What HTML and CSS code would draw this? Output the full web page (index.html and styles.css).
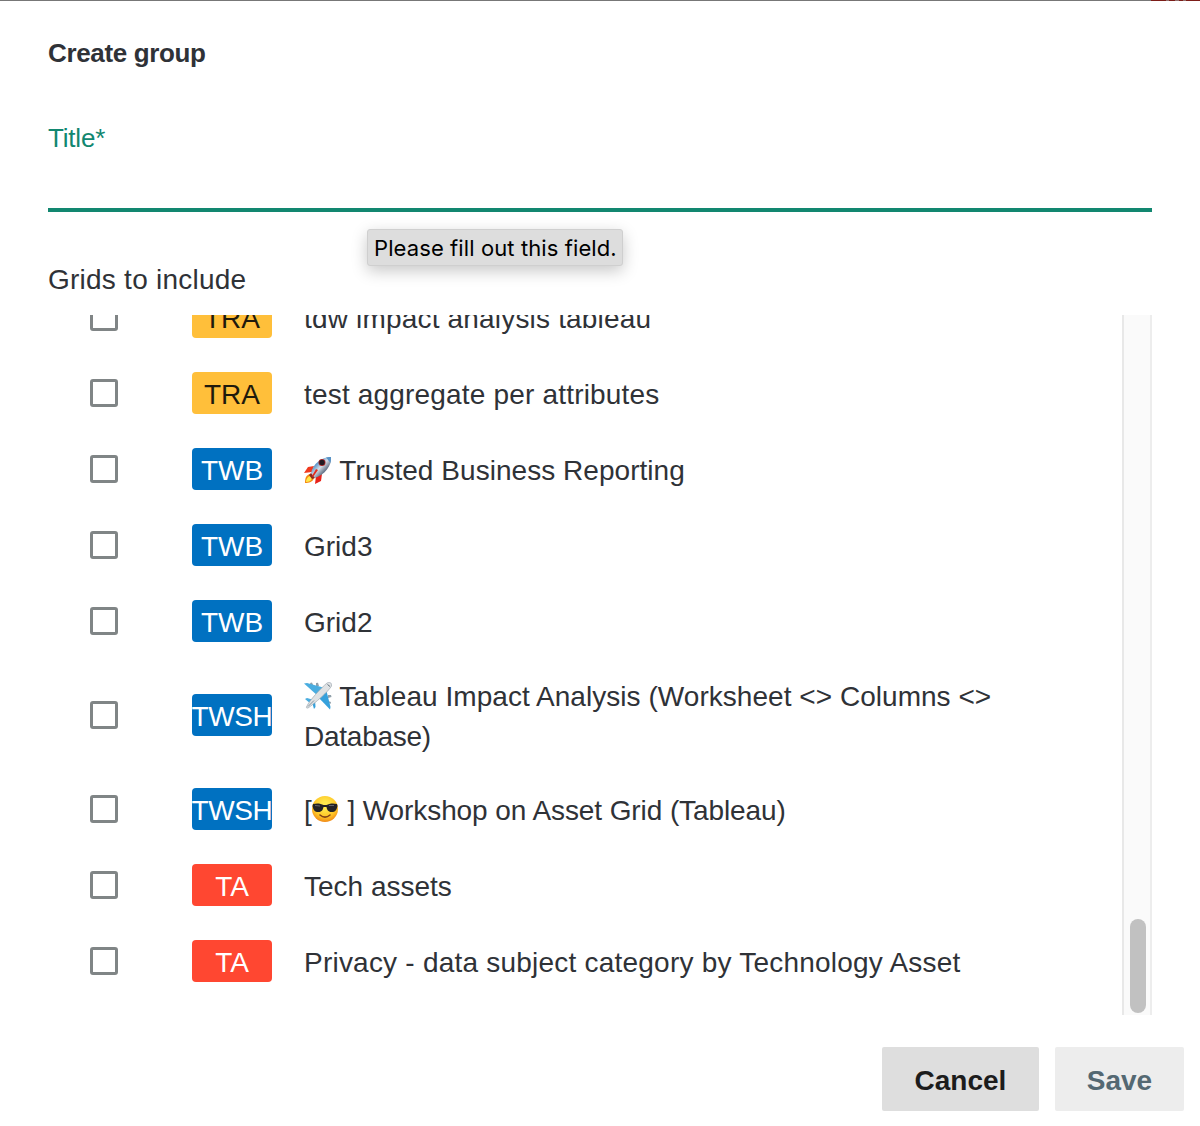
FILE: index.html
```html
<!DOCTYPE html>
<html lang="en">

<head>
    <meta charset="UTF-8">
    <meta name="viewport" content="width=device-width, initial-scale=1.0">
    <title>Create group</title>
    <link rel="stylesheet" href="styles.css">
</head>

<body>
    <form class="dialog" novalidate>
        <div class="backdrop-edge"><span></span></div>
        <div class="content">
            <h1>Create group</h1>
            <div class="form-group">
                <label for="title">Title*</label>
                <input type="text" id="title" required>
                <div class="tooltip">Please fill out this field.</div>
            </div>
            <h2>Grids to include</h2>
            <div class="grid-list">
                <div class="rows">
                    <div class="row">
                        <span class="checkbox"></span>
                        <span class="badge yellow">TRA</span>
                        <span class="name loose">tdw impact analysis tableau</span>
                    </div>
                    <div class="row">
                        <span class="checkbox"></span>
                        <span class="badge yellow">TRA</span>
                        <span class="name loose">test aggregate per attributes</span>
                    </div>
                    <div class="row">
                        <span class="checkbox"></span>
                        <span class="badge blue">TWB</span>
                        <span class="name normal"><svg class="emoji" viewBox="0 0 28 28">
                                <defs>
                                    <linearGradient id="hull" x1="0" y1="0" x2="1" y2="1">
                                        <stop offset="0.25" stop-color="#3f86c4" />
                                        <stop offset="0.48" stop-color="#d5dde6" />
                                        <stop offset="0.7" stop-color="#5b6b80" />
                                    </linearGradient>
                                </defs>
                                <path d="M10 10L4 11L0 17L8 16Z" fill="#f0391e" />
                                <path d="M18 18L17 25L11 28L12 20Z" fill="#e8221a" />
                                <path d="M6 18C2 19 1 22 1 27C5 27 9 26 10 22Z" fill="#f58a12" />
                                <path d="M6 20C3 21 2 24 2 26C5 26 7 25 8 22Z" fill="#ffe94a" />
                                <path d="M7 17C9 8 17 1 27 1C28 10 20 19 11 22Z" fill="url(#hull)" />
                                <path d="M22 1.5C24 1 26 1 27 1C27 3 27 5 26.500 7Z" fill="#5792c6" />
                                <path d="M7 17L11 22L8 23L5 19Z" fill="#8c2920" />
                                <path d="M14 14L9 21L8 20L12 13Z" fill="#e32b1d" />
                                <circle cx="18" cy="6.500" r="3.500" fill="#b52b2b" />
                                <circle cx="18" cy="6.500" r="2.700" fill="#211b22" />
                            </svg> Trusted Business Reporting</span>
                    </div>
                    <div class="row">
                        <span class="checkbox"></span>
                        <span class="badge blue">TWB</span>
                        <span class="name">Grid3</span>
                    </div>
                    <div class="row">
                        <span class="checkbox"></span>
                        <span class="badge blue">TWB</span>
                        <span class="name">Grid2</span>
                    </div>
                    <div class="row">
                        <span class="checkbox"></span>
                        <span class="badge blue wide">TWSH</span>
                        <span class="name normal"><svg class="emoji" viewBox="0 0 28 28">
                                <path d="M7 4L6 1L8 0.500L9.500 4M12 4L12 1L14 0.800L15 4M24 13L27 13L27.500 15L24 16M24 19L27 20L26.500 22L23.500 20" fill="#91a0aa" />
                                <path d="M0 1.500L3 1L21 6L14 14Z" fill="#49ade0" />
                                <path d="M22 7L26.500 25L26 27.500L14 15Z" fill="#36a1dc" />
                                <path d="M1 17L3 16L10 18L7 22Z" fill="#49ade0" />
                                <path d="M8 20L11 18L11.500 25L10 27Z" fill="#36a1dc" />
                                <path d="M3 24C5 19 17 6 23 1C25 0 28 0 27.500 4C25 9 10 22 4 26C2 26.500 2 25 3 24Z" fill="#dfe2e4" stroke="#9da8b0" stroke-width="0.700" />
                                <path d="M23.500 2.500L26 4.500" stroke="#62717c" stroke-width="1" />
                                <path d="M4 24.500L10 18.500" stroke="#8796a1" stroke-width="1" />
                            </svg> Tableau Impact Analysis (Worksheet &lt;&gt; Columns &lt;&gt; <span class="last-line">Database)</span></span>
                    </div>
                    <div class="row">
                        <span class="checkbox"></span>
                        <span class="badge blue wide">TWSH</span>
                        <span class="name tight">[<svg class="emoji" viewBox="0 0 28 28">
                                <defs>
                                    <radialGradient id="skin" cx="0.5" cy="0.35" r="0.65">
                                        <stop offset="0.2" stop-color="#ffe94c" />
                                        <stop offset="0.7" stop-color="#ffc425" />
                                        <stop offset="1" stop-color="#f08a18" />
                                    </radialGradient>
                                </defs>
                                <circle cx="13" cy="13" r="13" fill="url(#skin)" />
                                <path d="M1 8C5 7 9 7.500 11.500 9H14.500C17 7.500 21 7 25 8L25.500 10C24.500 14 23.500 16 19.500 16C16 16 15 13.500 14.500 11H11.500C11 13.500 10 16 6.500 16C2.500 16 1.500 14 0.500 10Z" fill="#242326" />
                                <path d="M3 9.500L8 10M17 9.500L22 9.500" stroke="#65656a" stroke-width="1" />
                                <path d="M8 19C11 21.500 15 21.500 18 19" fill="none" stroke="#804016" stroke-width="1.600" stroke-linecap="round" />
                            </svg> ] Workshop on Asset Grid (Tableau)</span>
                    </div>
                    <div class="row">
                        <span class="checkbox"></span>
                        <span class="badge red">TA</span>
                        <span class="name">Tech assets</span>
                    </div>
                    <div class="row">
                        <span class="checkbox"></span>
                        <span class="badge red">TA</span>
                        <span class="name looser">Privacy - data subject category by Technology Asset</span>
                    </div>
                </div>
                <div class="scrollbar">
                    <div class="thumb"></div>
                </div>
            </div>
        </div>
        <div class="actions">
            <button type="button" class="cancel">Cancel</button>
            <button type="submit" class="save" disabled>Save</button>
        </div>
    </form>
</body>

</html>
```
FILE: styles.css
```css
* {
    box-sizing: border-box;
}

body {
    margin: 0;
    font-family: "Liberation Sans", Arial, sans-serif;
    color: #2f3237;
    background-color: #fff;
}

.dialog {
    height: 1126px;
    overflow: hidden;
}

.backdrop-edge {
    height: 1px;
    display: flex;
    justify-content: flex-end;
    background-color: #777;
}

.backdrop-edge span {
    width: 49px;
    background: linear-gradient(to right, #7c1d18 15px, #926f6c 15px 18px, #7c1d18 18px 24px, #926f6c 24px 28px, #7c1d18 28px 32px, #926f6c 32px 35px, #7c1d18 35px);
}

.content {
    padding: 36px 48px 0;
}

h1 {
    margin: 0;
    font-size: 26px;
    line-height: 32px;
    letter-spacing: -0.35px;
}

.form-group {
    position: relative;
    height: 143px;
    padding-top: 53px;
}

label {
    display: block;
    font-size: 26px;
    line-height: 32px;
    letter-spacing: -0.2px;
    color: #128770;
}

input {
    display: block;
    width: 100%;
    height: 58px;
    padding: 0;
    border: none;
    border-bottom: 4px solid #128770;
    outline: none;
    font-size: 28px;
}

.tooltip {
    position: absolute;
    top: 160px;
    left: 319px;
    width: 256px;
    height: 37px;
    padding-left: 6px;
    border: 1px solid #cfcfcf;
    border-radius: 3px;
    background-color: #dddddd;
    box-shadow: 0 5px 16px rgba(0, 0, 0, 0.22);
    color: #000;
    font-family: Inter, sans-serif;
    font-size: 22px;
    line-height: 37px;
    letter-spacing: 0.1px;
    white-space: nowrap;
}

h2 {
    margin: 0;
    padding-top: 48px;
    height: 103px;
    font-size: 28px;
    font-weight: normal;
    line-height: 40px;
    letter-spacing: 0.24px;
}

.grid-list {
    display: flex;
    height: 700px;
    overflow: hidden;
}

/* scrolled to the bottom */
.rows {
    flex: 1;
    display: flex;
    flex-direction: column;
    justify-content: flex-end;
    padding-bottom: 16px;
}

.row {
    flex: none;
    display: flex;
    align-items: center;
    min-height: 76px;
    padding: 16px 100px 16px 42px;
}

.checkbox {
    flex: none;
    width: 28px;
    height: 28px;
    margin-right: 74px;
    border: 3px solid #808586;
    border-radius: 3px;
}

.badge {
    flex: none;
    width: 80px;
    height: 42px;
    margin-right: 32px;
    border-radius: 4px;
    overflow: hidden;
    display: flex;
    justify-content: center;
    font-size: 28px;
    line-height: 45px;
    color: #fff;
}

.wide {
    letter-spacing: -0.4px;
}

.yellow {
    background-color: #ffbf3a;
    color: #1f1a0c;
}

.blue {
    background-color: #0071c1;
}

.red {
    background-color: #ff4731;
}

.name {
    font-size: 28px;
    line-height: 40px;
    padding-top: 2px;
    margin-bottom: -2px;
}

.normal {
    letter-spacing: 0.04px;
}

.loose {
    letter-spacing: 0.18px;
}

.looser {
    letter-spacing: 0.22px;
}

.tight {
    letter-spacing: -0.09px;
}

.last-line {
    display: block;
    letter-spacing: -0.25px;
}

.emoji {
    width: 28px;
    height: 28px;
    vertical-align: -4px;
}

.scrollbar {
    width: 30px;
    display: flex;
    align-items: flex-end;
    justify-content: center;
    padding-bottom: 2px;
    border-left: 2px solid #e8e8e8;
    border-right: 2px solid #ededed;
    background-color: #fafafa;
}

.thumb {
    width: 16px;
    height: 94px;
    margin-left: 2px;
    border-radius: 8px;
    background-color: #c1c1c1;
}

.actions {
    display: flex;
    justify-content: flex-end;
    gap: 16px;
    padding: 32px 16px 0;
}

button {
    height: 64px;
    padding: 3px 0 0;
    border: none;
    border-radius: 2px;
    font-family: inherit;
    font-size: 28px;
    font-weight: bold;
}

.cancel {
    width: 157px;
    background-color: #dedede;
    color: #1c1c1c;
}

.save {
    width: 129px;
    background-color: #ededed;
    color: #546872;
}
```
